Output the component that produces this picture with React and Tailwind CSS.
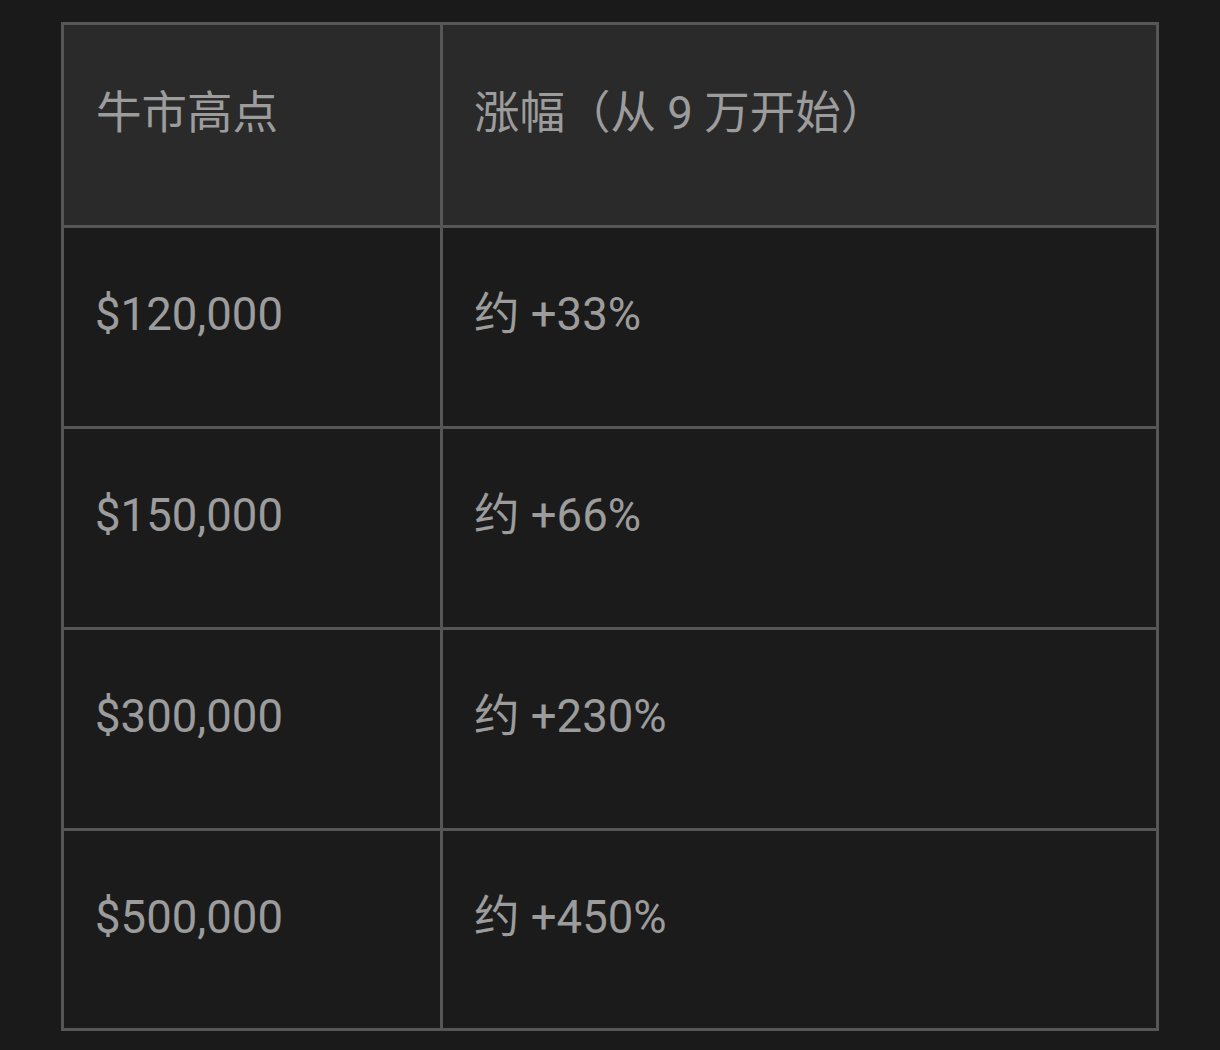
import React from "react";

const rows = [
  { price: "$120,000", gain: "约 +33%" },
  { price: "$150,000", gain: "约 +66%" },
  { price: "$300,000", gain: "约 +230%" },
  { price: "$500,000", gain: "约 +450%" },
];

export default function App() {
  return (
    <div className="min-h-[1050px] bg-[#1a1a1a] pt-[22px] pl-[61px] font-['Roboto','Noto_Sans_CJK_SC',sans-serif] text-[45.5px] leading-[54px] text-[#9c9c9c]">
      <div className="w-[1098px] border-[3px] border-[#565656]">
        {/* HEADER */}
        <div className="grid grid-cols-[379px_1fr] bg-[#2a2a2a] border-b-[3px] border-[#565656]">
          <div className="h-[200px] border-r-[3px] border-[#565656] pl-[32px] pt-[62px]">
            牛市高点
          </div>
          <div className="h-[200px] pl-[31px] pt-[62px]">涨幅（从 9 万开始）</div>
        </div>

        {/* ROWS */}
        {rows.map((r, i) => (
          <div
            key={r.price}
            className={
              "grid grid-cols-[379px_1fr] bg-[#1b1b1b] " +
              (i < rows.length - 1 ? "h-[201px] border-b-[3px] border-[#565656]" : "h-[197px]")
            }
          >
            <div className="border-r-[3px] border-[#565656] pl-[31px] pt-[60px]">
              {r.price}
            </div>
            <div className="pl-[31px] pt-[60px]">{r.gain}</div>
          </div>
        ))}
      </div>
    </div>
  );
}
